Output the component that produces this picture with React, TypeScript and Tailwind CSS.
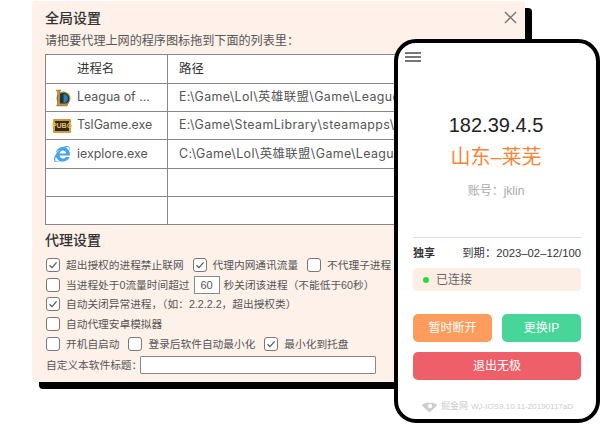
import { FaInternetExplorer } from "react-icons/fa";

const FONT = "font-['Liberation_Sans','Noto_Sans_CJK_SC',sans-serif]";

// Fullwidth punctuation, written as escapes so the editor can't normalise them
const COLON = "\uFF1A";
const COMMA = "\uFF0C";
const LP = "\uFF08";
const RP = "\uFF09";

// Checkbox with optional tick
const Box = ({ on = false }: { on?: boolean }) => (
  <span className="flex h-[14px] w-[14px] shrink-0 items-center justify-center rounded-[3px] border border-[#777] bg-white">
    {on && (
      <svg width="10" height="10" viewBox="0 0 10 10" fill="none">
        <path d="M1.5 5.2 4 7.6 8.6 2.4" stroke="#555" strokeWidth="1.2" />
      </svg>
    )}
  </span>
);

const Option = ({ on, label, className = "" }: { on?: boolean; label: string; className?: string }) => (
  <span className={`flex items-center gap-[6px] ${className}`}>
    <Box on={on} />
    <span className="whitespace-nowrap">{label}</span>
  </span>
);

const LolIcon = () => (
  <svg width="17" height="18" viewBox="0 0 17 18">
    <circle cx="9.500" cy="9.500" r="7" fill="#b98a35" />
    <circle cx="9.500" cy="9.500" r="5.800" fill="#12344f" />
    <path d="M9.500 5a4.500 4.500 0 0 1 0 9z" fill="#2a7ea8" />
    <path d="M2 1h5L6 2.500V14.500h6.500l2-1.500-1.500 4H2.500L3.500 15V3z" fill="#c4923a" stroke="#6f4f1a" strokeWidth=".4" />
  </svg>
);

const PubgIcon = () => (
  <span className="flex h-[14px] w-[18px] items-center justify-center rounded-[1px] border-2 border-[#d39a35] bg-[#2e2a20] font-['Liberation_Sans'] text-[7px] font-bold leading-none text-[#e8c070]">
    PUBG
  </span>
);

const rows = [
  { icon: <LolIcon />, name: "Leagua of ...", path: "E:\\Game\\Lol\\英雄联盟\\Game\\League of Legends.exe" },
  { icon: <PubgIcon />, name: "TslGame.exe", path: "E:\\Game\\SteamLibrary\\steamapps\\PUBG\\TslGame.exe" },
  { icon: <FaInternetExplorer className="text-[16px] text-[#46a3f2]" />, name: "iexplore.exe", path: "C:\\Game\\Lol\\英雄联盟\\Game\\League of Legends.exe" },
  { icon: null, name: "", path: "" },
  { icon: null, name: "", path: "" },
];

const Settings = () => (
  <div className="ml-[32px] mt-[1px] flex h-[381px] w-[493px] flex-col rounded-[4px] bg-[#fdf1e9] pl-[13px] pr-[13px] text-[#555] shadow-[7px_7px_0_#000]">
    <div className="-mr-[5px] flex h-[28px] items-end justify-between">
      <h1 className="text-[14px] font-medium leading-[22px] text-[#333]">全局设置</h1>
      <svg width="13" height="13" viewBox="0 0 14 14" className="mb-[5px]" stroke="#777" strokeWidth="1.5">
        <path d="M1 1l12 12M13 1 1 13" />
      </svg>
    </div>
    <p className="mt-[4px] h-[21px] text-[12.1px] leading-[16px]">{`请把要代理上网的程序图标拖到下面的列表里${COLON}`}</p>

    <div className="border-l border-t border-r border-[#888] bg-white text-[12.4px]">
      <div className="flex h-[29px] border-b border-[#888] text-[#333]">
        <div className="w-[122px] shrink-0 border-r border-[#888] pl-[31px] leading-[28px]">进程名</div>
        <div className="pl-[11px] leading-[28px]">路径</div>
      </div>
      {rows.map((r, i) => (
        <div key={i} className="flex h-[28.2px] overflow-hidden border-b border-[#888] font-['Inter','Noto_Sans_CJK_SC',sans-serif]">
          <div className="flex w-[122px] shrink-0 items-center border-r border-[#888]">
            <span className="flex w-[31px] shrink-0 items-center justify-center pl-[1px]">{r.icon}</span>
            <span className="whitespace-nowrap">{r.name}</span>
          </div>
          <div className="flex items-center whitespace-nowrap pl-[11px] tracking-[0.4px]">{r.path}</div>
        </div>
      ))}
    </div>

    <h2 className="mt-[5px] text-[14px] font-medium leading-[21px] text-[#333]">代理设置</h2>

    <div className="mt-[4px] flex flex-col text-[10.7px] leading-[20px]">
      <div className="flex h-[19.8px] items-center">
        <Option on label="超出授权的进程禁止联网" className="ml-[1px]" />
        <Option on label="代理内网通讯流量" className="ml-[9px]" />
        <Option label="不代理子进程" className="ml-[9px]" />
      </div>
      <div className="flex h-[19.8px] items-center">
        <Option label="当进程处于0流量时间超过" className="ml-[1px]" />
        <span className="mx-[4px] flex h-[18px] w-[26px] items-center justify-center border border-[#888] bg-white text-[11px]">60</span>
        <span className="whitespace-nowrap">{`秒关闭该进程${LP}不能低于60秒${RP}`}</span>
      </div>
      <div className="flex h-[19.8px] items-center">
        <Option on label={`自动关闭异常进程${COMMA}${LP}如${COLON}2.2.2.2${COMMA}超出授权类${RP}`} className="ml-[1px]" />
      </div>
      <div className="flex h-[19.8px] items-center">
        <Option label="自动代理安卓模拟器" className="ml-[1px]" />
      </div>
      <div className="flex h-[19.8px] items-center">
        <Option label="开机自启动" className="ml-[1px]" />
        <Option label="登录后软件自动最小化" className="ml-[9px]" />
        <Option on label="最小化到托盘" className="ml-[9px]" />
      </div>
      <div className="mt-[1px] flex h-[20px] items-center">
        <span className="ml-[1px] whitespace-nowrap">{`自定义本软件标题${COLON}`}</span>
        <span className="-ml-[2px] h-[18px] w-[236px] rounded-[1px] border border-[#888] bg-white" />
      </div>
    </div>
  </div>
);

const Phone = () => (
  <div className="absolute left-[394px] top-[39px] flex h-[384px] w-[206px] flex-col rounded-[22px] border-4 border-black bg-white px-[15px] text-[#333]">
    <div className="-ml-[8px] mt-[9px] flex w-[16px] flex-col gap-[2.2px]">
      <span className="h-[2px] bg-[#777]" />
      <span className="h-[2px] bg-[#777]" />
      <span className="h-[2px] bg-[#777]" />
    </div>
    <div className="mt-[49px] pr-[2px] text-center text-[20px] leading-[28px] text-[#222]">182.39.4.5</div>
    <div className="mt-[4px] pr-[2px] text-center text-[20px] leading-[28px] text-[#f98436]">山东–莱芜</div>
    <div className="mt-[11px] pr-[2px] text-center text-[12px] leading-[18px] text-[#aaa]">{`账号${COLON}jklin`}</div>
    <div className="mt-[37px] border-t border-[#ddd]" />
    <div className="mt-[7px] flex h-[16px] items-center justify-between text-[11px] leading-[16px]">
      <span className="font-bold">独享</span>
      <span className="whitespace-nowrap text-[11.3px]">{`到期${COLON}2023–02–12/100`}</span>
    </div>
    <div className="mt-[7px] flex h-[23px] items-center rounded-[4px] bg-[#fdeee5] pl-[10px] text-[12px] text-[#666]">
      <span className="h-[6px] w-[6px] rounded-full bg-[#1fe03a]" />
      <span className="ml-[7px]">已连接</span>
    </div>
    <div className="mt-[23px] flex gap-[10px] text-[12px] text-white">
      <button className="h-[28px] w-[79px] rounded-[5px] bg-[#fd9c5c]">暂时断开</button>
      <button className="h-[28px] w-[79px] rounded-[5px] bg-[#47d697]">更换IP</button>
    </div>
    <button className="mt-[10px] h-[28px] rounded-[5px] bg-[#ef5f69] text-[12px] text-white">退出无极</button>
    <div className="ml-[8px] mt-[20px] flex items-center whitespace-nowrap text-[#ccc]">
      <svg width="17" height="11" viewBox="0 0 17 11" fill="none" className="shrink-0">
        <path d="M.5 3 5 .8h7L16.500 3 8.500 10.500z" fill="#ccc" />
        <circle cx="9" cy="4" r="2.200" fill="#fff" />
      </svg>
      <span className="ml-[3px] text-[9px]">掘金网</span>
      <span className="ml-[3px] text-[8px]">WJ-IOS9.10.11-20190117aD</span>
    </div>
  </div>
);

export default function App() {
  return (
    <div className={`relative h-[441px] w-[600px] overflow-hidden bg-white ${FONT}`}>
      <Settings />
      <Phone />
    </div>
  );
}
